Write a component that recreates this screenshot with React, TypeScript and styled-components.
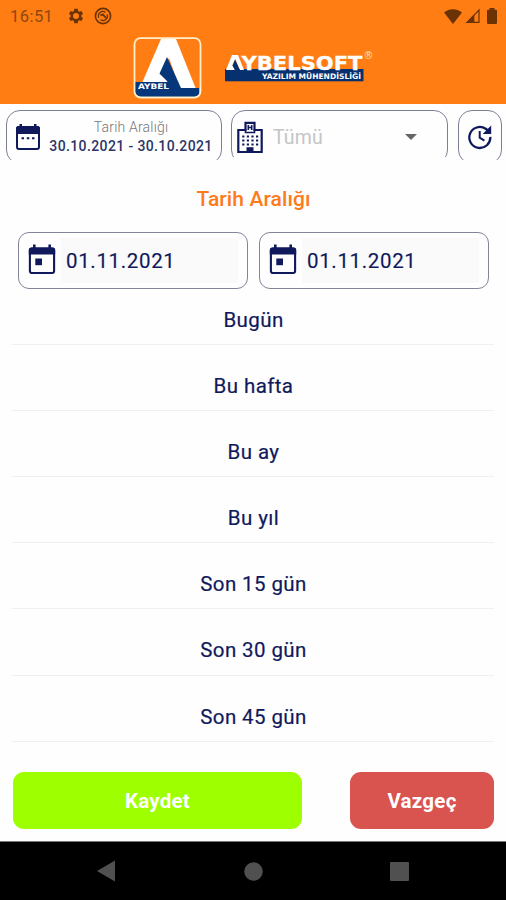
import React from "react";
import styled, { createGlobalStyle } from "styled-components";

const NAVY = "#10195c";
const ORANGE = "#ff7d12";

const GlobalStyle = createGlobalStyle`
  * { box-sizing: border-box; }
  body { margin: 0; background: #fff; font-family: Roboto, sans-serif; }
  button { font-family: inherit; }
`;

const Screen = styled.div`
  width: 506px;
  height: 900px;
  display: flex;
  flex-direction: column;
  overflow: hidden;
  background: #fefefe;
`;

const Header = styled.header`
  height: 104px;
  flex: none;
  background: ${ORANGE};
`;

const StatusBar = styled.div`
  height: 32px;
  display: flex;
  align-items: center;
  padding: 0 6px 0 10px;
  color: #6b3205;
`;

const Clock = styled.span`
  width: 57px;
  font-size: 16.5px;
  letter-spacing: 0.45px;
  color: #8c480f;
`;

const StatusIcons = styled.div<{ $end?: boolean }>`
  display: flex;
  align-items: center;
  gap: ${(p) => (p.$end ? "3px" : "9px")};
  margin-left: ${(p) => (p.$end ? "auto" : "0")};
  svg { display: block; }
`;

const Brand = styled.div`
  display: flex;
  align-items: flex-start;
  padding: 5px 0 0 133px;
  gap: 22px;
  svg { display: block; flex: none; }
`;

const FilterBar = styled.div`
  height: 56px;
  flex: none;
  display: flex;
  align-items: flex-start;
  padding: 6px 4px 0 6px;
  overflow: hidden;
`;

const FilterBox = styled.div<{ $width: number; $gap?: number; $clip?: number }>`
  width: ${(p) => p.$width}px;
  margin-right: ${(p) => p.$gap ?? 0}px;
  height: 54px;
  flex: none;
  display: flex;
  align-items: center;
  border: 1px solid #7c8094;
  border-radius: 14px;
  clip-path: inset(0 0 ${(p) => p.$clip ?? 4}px 0);
  svg { display: block; flex: none; }
`;

const RangeSummary = styled.div`
  width: 164px;
  margin-left: 8px;
  display: flex;
  flex-direction: column;
  align-items: center;
  white-space: nowrap;
`;

const RangeLabel = styled.span`
  font-size: 14px;
  line-height: 18px;
  font-weight: 300;
  letter-spacing: 0.2px;
  color: #777;
`;

const RangeValue = styled.span`
  font-size: 14px;
  line-height: 20px;
  font-weight: 500;
  letter-spacing: 0.38px;
  color: #2b3468;
`;

const SelectText = styled.span`
  flex: 1;
  margin-left: 10px;
  font-size: 19.5px;
  letter-spacing: 0.1px;
  color: #c4c4c6;
`;

const Sheet = styled.main`
  flex: 1;
  display: flex;
  flex-direction: column;
  padding: 24px 12px 0;
`;

const SheetTitle = styled.h1`
  margin: 0;
  height: 30px;
  line-height: 30px;
  font-size: 21px;
  font-weight: 500;
  letter-spacing: 0.1px;
  text-indent: 1px;
  text-align: center;
  color: #ff7a1a;
`;

const DateRow = styled.div`
  display: flex;
  gap: 11px;
  margin: 18px 4px 0 6px;
`;

const DateField = styled.div`
  width: 230px;
  height: 57px;
  display: flex;
  align-items: center;
  padding: 5px 9px 5px 9px;
  border: 1px solid #82859a;
  border-radius: 11px;
  svg { display: block; flex: none; margin-top: -3px; }
`;

const DateValue = styled.span`
  flex: 1;
  height: 100%;
  margin-left: 5px;
  padding-left: 5px;
  line-height: 47px;
  font-size: 20.5px;
  letter-spacing: 0.65px;
  background: #fafafa;
  color: ${NAVY};
  -webkit-text-stroke: 0.15px ${NAVY};
`;

const OptionList = styled.ul`
  list-style: none;
  margin: -10px 0 0;
  padding: 0;
`;

const Option = styled.li`
  height: 66.1px;
  padding-top: 27px;
  line-height: 28px;
  font-size: 20.5px;
  letter-spacing: 0.4px;
  text-indent: 1px;
  text-align: center;
  border-bottom: 1px solid #f0f0f1;
  color: ${NAVY};
  -webkit-text-stroke: 0.2px ${NAVY};
`;

const Actions = styled.div`
  display: flex;
  justify-content: space-between;
  margin: 30px 0 0 1px;
`;

const ActionButton = styled.button<{ $width: number; $color: string }>`
  width: ${(p) => p.$width}px;
  height: 57px;
  padding: 2px 0 0;
  border: 0;
  border-radius: 11px;
  background: ${(p) => p.$color};
  color: #fff;
  font-size: 20.5px;
  font-weight: 700;
  letter-spacing: 0.25px;
`;

const NavBar = styled.nav`
  height: 59px;
  flex: none;
  display: flex;
  justify-content: center;
  align-items: center;
  gap: 127px;
  border-top: 1px solid #777;
  background: #000;
  svg { display: block; }
`;

const GEAR =
  "M19.14 12.94c.04-.3.06-.61.06-.94s-.02-.64-.07-.94l2.03-1.58a.49.49 0 0 0 .12-.61l-1.92-3.32a.49.49 0 0 0-.59-.22l-2.39.96a7 7 0 0 0-1.62-.94l-.36-2.54a.48.48 0 0 0-.48-.41h-3.84a.47.47 0 0 0-.47.41l-.36 2.54c-.59.24-1.13.57-1.62.94l-2.39-.96a.48.48 0 0 0-.59.22L2.74 8.87a.47.47 0 0 0 .12.61l2.03 1.58a7 7 0 0 0 0 1.88l-2.03 1.58a.49.49 0 0 0-.12.61l1.92 3.32c.12.22.37.29.59.22l2.39-.96c.5.38 1.03.7 1.62.94l.36 2.54c.05.24.24.41.48.41h3.84c.24 0 .44-.17.47-.41l.36-2.54a7 7 0 0 0 1.62-.94l2.39.96c.22.08.47 0 .59-.22l1.92-3.32a.47.47 0 0 0-.12-.61zM12 16a4 4 0 1 1 0-8 4 4 0 0 1 0 8z";

const GearIcon = () => (
  <svg width="18" height="18" viewBox="0 0 24 24" fill="#6b3205" fillRule="evenodd">
    <path d={GEAR} />
  </svg>
);

const SyncBadgeIcon = () => (
  <svg width="18" height="18" viewBox="0 0 18 18" fill="none" stroke="#6b3205">
    <circle cx="9" cy="9" r="7.6" strokeWidth="1.6" />
    <path d="M4.800 10.800A4.500 4.500 0 0 1 11.500 5.300M6.500 12.700A4.500 4.500 0 0 0 13.200 7.400" strokeWidth="1.300" />
    <path d="M6.300 8.200 9 7.600 12 11" strokeWidth="1.800" />
  </svg>
);

const WifiIcon = () => (
  <svg width="18" height="15" viewBox="0 0 18 15" fill="#6b3205">
    <path d="M0 3.6C5-1 13-1 18 3.6L9 15z" />
  </svg>
);

const SignalIcon = () => (
  <svg width="16" height="16" viewBox="0 0 16 16">
    <path d="M2 14.3 14 2v12.3z" fill="none" stroke="#6b3205" strokeWidth="1.2" />
    <path d="M1 15 9.3 6.6V15z" fill="#6b3205" />
  </svg>
);

const BatteryIcon = () => (
  <svg width="16" height="16" viewBox="0 0 16 16" fill="#6b3205">
    <path d="M5.500 0h5v1.800H12a1 1 0 0 1 1 1V15a1 1 0 0 1-1 1H4a1 1 0 0 1-1-1V2.800a1 1 0 0 1 1-1h1.500z" />
  </svg>
);

const LogoMark = () => (
  <svg width="70" height="62" viewBox="0 0 70 62">
    <path d="M28 2H43L63 52H47L36 21 27 37 34 43V46H9z" fill="#fff" />
    <path d="M2 45H35L26.500 36.500 34 20 48 51H66V58Q66 60 61 60H9Q4 60 2 55z" fill="#07377b" />
    <rect x="1.500" y="1.200" width="66" height="59.300" rx="6" fill="none" stroke="#fff0c9" strokeWidth="1.800" />
    <text x="5" y="52" fontFamily="DejaVu Sans" fontWeight="700" fontSize="7.500" fill="#fff" textLength="31" lengthAdjust="spacingAndGlyphs">AYBEL</text>
  </svg>
);

const Wordmark = () => (
  <svg width="149" height="48" viewBox="0 0 149 48">
    <rect x="0" y="32" width="138.500" height="12.300" fill="#07306e" />
    <path d="M1 33 7 18H13L19 33H15L10.300 22 7.500 28.500 10 33z" fill="#fff" />
    <path d="M10 22.500 7.500 28.500 10 33H14.800z" fill="#07306e" />
    <text x="16.500" y="32.500" fontFamily="DejaVu Sans" fontWeight="700" fontSize="19.500" fill="#fff" stroke="#fff" strokeWidth="0.300" textLength="121" lengthAdjust="spacingAndGlyphs">YBELSOFT</text>
    <text x="37" y="42" fontFamily="DejaVu Sans" fontWeight="700" fontSize="7.500" fill="#fff" textLength="99" lengthAdjust="spacingAndGlyphs">YAZILIM MÜHENDİSLİĞİ</text>
    <text x="138.500" y="22" fontFamily="DejaVu Sans" fontSize="10" fill="#ffe0b5">®</text>
  </svg>
);

const RangeIcon = () => (
  <svg width="26" height="28" viewBox="0 0 26 28">
    <rect x="2" y="4" width="22" height="22" rx="2" fill="none" stroke={NAVY} strokeWidth="2" />
    <path d="M1 11V5.500q0-2.500 2.500-2.500h19q2.500 0 2.500 2.500V11zM4.500 1h2.500v4H4.500zM19 1h2.500v4H19z" fill={NAVY} />
    <path d="M6.500 14.200H9v2H6.500zM11.800 14.200h2.500v2h-2.500zM17 14.200h2.500v2H17z" fill={NAVY} />
  </svg>
);

const DayIcon = () => (
  <svg width="28" height="31" viewBox="0 0 28 31">
    <rect x="1.900" y="4.500" width="24.200" height="24.500" rx="2" fill="none" stroke={NAVY} strokeWidth="2.100" />
    <path d="M.8 10.500V6q0-2.500 2.500-2.500h21.400q2.500 0 2.500 2.500v4.500zM5 .5h2.600v4H5zM20.400.5H23v4h-2.600z" fill={NAVY} />
    <path d="M7.300 14.500h6.700v6.700H7.300z" fill={NAVY} />
  </svg>
);

const BuildingIcon = () => (
  <svg width="26" height="33" viewBox="0 0 26 33">
    <path d="M1.300 31V9H8.500V1.800h9V9h7.200v22z" fill="none" stroke={NAVY} strokeWidth="2.200" />
    <path d="M8.500 8v3.500h9V8M11.300 4v5M14.700 4v5M11.300 6.500h3.400" fill="none" stroke={NAVY} strokeWidth="1.600" />
    <path d="M5.200 15.500h16.500M5.200 19.500h16.500M5.200 23.500h16.500" stroke={NAVY} strokeWidth="1.900" strokeDasharray="2.200 2.400" />
    <path d="M9.500 31v-4.800h7V31z" fill={NAVY} />
  </svg>
);

const RecentIcon = () => (
  <svg width="26" height="26" viewBox="0 0 26 26" fill="none" stroke={NAVY}>
    <path d="M23.300 12.800A10.500 10.500 0 1 1 18.700 4.800L21 6.500" strokeWidth="2.300" />
    <path d="M24.200 1.500V10h-8.500z" fill={NAVY} stroke="none" />
    <path d="M12.700 7v6.700l4.700 3" strokeWidth="2" />
  </svg>
);

const CaretDown = styled.span`
  width: 0;
  height: 0;
  margin-right: 30px;
  border: 6px solid transparent;
  border-top-color: #666;
  border-bottom: 0;
`;

const IconSlot = styled.div<{ $inset: number }>`
  padding-left: ${(p) => p.$inset}px;
`;

const OPTIONS = ["Bugün", "Bu hafta", "Bu ay", "Bu yıl", "Son 15 gün", "Son 30 gün", "Son 45 gün"];

export default function App() {
  return (
    <Screen>
      <GlobalStyle />
      <Header>
        <StatusBar>
          <Clock>16:51</Clock>
          <StatusIcons>
            <GearIcon />
            <SyncBadgeIcon />
          </StatusIcons>
          <StatusIcons $end>
            <WifiIcon />
            <SignalIcon />
            <BatteryIcon />
          </StatusIcons>
        </StatusBar>
        <Brand>
          <LogoMark />
          <Wordmark />
        </Brand>
      </Header>
      <FilterBar>
        <FilterBox $width={216} $gap={9}>
          <IconSlot $inset={8}><RangeIcon /></IconSlot>
          <RangeSummary>
            <RangeLabel>Tarih Aralığı</RangeLabel>
            <RangeValue>30.10.2021 - 30.10.2021</RangeValue>
          </RangeSummary>
        </FilterBox>
        <FilterBox $width={217} $gap={10} $clip={7}>
          <IconSlot $inset={5}><BuildingIcon /></IconSlot>
          <SelectText>Tümü</SelectText>
          <CaretDown />
        </FilterBox>
        <FilterBox $width={44}>
          <IconSlot $inset={8}><RecentIcon /></IconSlot>
        </FilterBox>
      </FilterBar>
      <Sheet>
        <SheetTitle>Tarih Aralığı</SheetTitle>
        <DateRow>
          {["start", "end"].map((edge) => (
            <DateField key={edge}>
              <DayIcon />
              <DateValue>01.11.2021</DateValue>
            </DateField>
          ))}
        </DateRow>
        <OptionList>
          {OPTIONS.map((label) => (
            <Option key={label}>{label}</Option>
          ))}
        </OptionList>
        <Actions>
          <ActionButton $width={289} $color="#9dff00">Kaydet</ActionButton>
          <ActionButton $width={144} $color="#d9534f">Vazgeç</ActionButton>
        </Actions>
      </Sheet>
      <NavBar>
        <svg width="20" height="22" viewBox="0 0 20 22"><path d="M0 11 18 .500v21z" fill="#505050" /></svg>
        <svg width="19" height="19" viewBox="0 0 19 19"><circle cx="9.500" cy="9.500" r="9.300" fill="#505050" /></svg>
        <svg width="20" height="19" viewBox="0 0 20 19"><rect width="19" height="19" rx="1" fill="#505050" /></svg>
      </NavBar>
    </Screen>
  );
}
